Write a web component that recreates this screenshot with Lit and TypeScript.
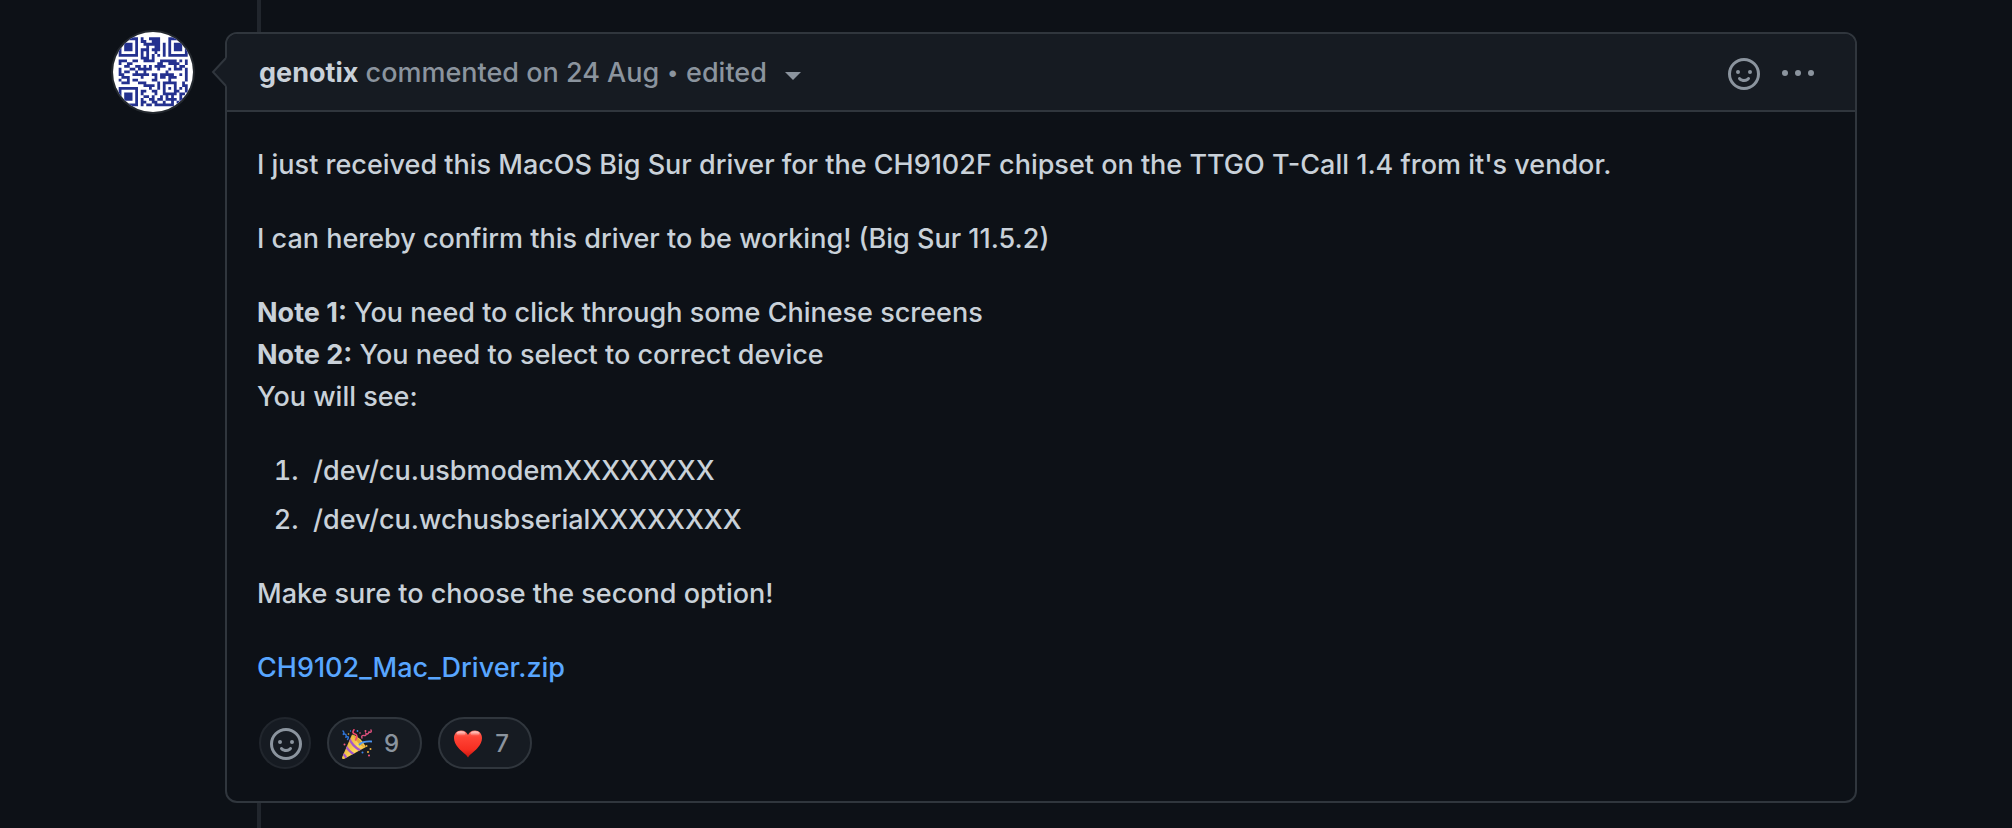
import { LitElement, html, css, svg } from "lit";
import { customElement } from "lit/decorators.js";

const QR_ROWS = [
  "1111111010011110001111111",
  "1000001011001110001000001",
  "1011101001111110101011101",
  "1011101000100110101011101",
  "1011101011101110101011101",
  "1000001010100100101000001",
  "1111111010101010101111111",
  "0000000011101000000000000",
  "1110011001111001111110101",
  "1001100000000011001111001",
  "0011001101010111100010110",
  "1000110111110010001011101",
  "1011001001000000010000001",
  "1100011111101101111100101",
  "0111000010000101101110001",
  "1001011000001100001000001",
  "0111000111000010111110010",
  "0000000001111010100010011",
  "1111111000010010101010101",
  "1000001011001100100011001",
  "1011101010000100111110110",
  "1011101001101001010100100",
  "1011101010011011011110110",
  "1000001011001100100101000",
  "1111111010110111111100100",
];

const CELL = 8.28;

const avatarPath = QR_ROWS.map((row, y) =>
  [...row]
    .map((bit, x) =>
      bit === "1"
        ? `M${(17 + x * CELL).toFixed(2)} ${(16 + y * CELL).toFixed(2)}h8.4v8.4h-8.4z`
        : ""
    )
    .join("")
).join("");

const smiley = html`<svg class="icon" viewBox="0 0 16 16" aria-hidden="true">
  ${svg`<path fill-rule="evenodd" d="M1.5 8a6.5 6.5 0 1113 0 6.5 6.5 0 01-13 0zM8 0a8 8 0 100 16A8 8 0 008 0zM5 8a1 1 0 100-2 1 1 0 000 2zm7-1a1 1 0 11-2 0 1 1 0 012 0zM5.32 9.636a.75.75 0 011.038.175l.007.009c.103.118.22.222.35.31.264.178.683.37 1.285.37.602 0 1.02-.192 1.285-.371.13-.088.247-.192.35-.31l.007-.008a.75.75 0 111.222.87l-.614-.431c.614.43.614.431.613.431v.001l-.001.002-.002.003-.005.007-.014.019a1.984 1.984 0 01-.184.213c-.16.166-.338.316-.53.445-.63.418-1.37.638-2.127.629-.946 0-1.652-.308-2.126-.63a3.32 3.32 0 01-.715-.657l-.014-.02-.005-.006-.002-.003v-.002h-.001l.613-.432-.614.43a.75.75 0 01.183-1.044h.001z"/>`}
</svg>`;

const kebab = html`<svg class="icon" viewBox="0 0 16 16" aria-hidden="true">
  <circle cx="1.5" cy="7.5" r="1.5"></circle>
  <circle cx="8" cy="7.5" r="1.5"></circle>
  <circle cx="14.5" cy="7.5" r="1.5"></circle>
</svg>`;

const party = html`<svg class="emoji" viewBox="0 0 30 30" aria-hidden="true">
  <defs>
    <linearGradient id="cone" x1="0" y1="0.2" x2="1" y2="0.8">
      <stop offset="0" stop-color="#d9952b"></stop>
      <stop offset="0.55" stop-color="#ffd95c"></stop>
      <stop offset="1" stop-color="#e0a02f"></stop>
    </linearGradient>
    <clipPath id="cone-clip"><path d="M0 28.5 10 5.500Q19 8 24 18L2 30Q0 30.500 0 28.500z"></path></clipPath>
  </defs>
  <g clip-path="url(#cone-clip)">
    <path d="M0 0h30v30H0z" fill="url(#cone)"></path>
    <path d="M7 9Q10 17 19 22M3.500 16Q6 22 13 26M0 24Q3 26 5 30" fill="none" stroke="#a558c9" stroke-width="2.200"></path>
  </g>
  <path d="M11 5.500Q17 9 20 14T23.500 18.500Q18 17 14.500 12T11 5.500" fill="#e2a93a"></path>
  <g fill="none" stroke-linecap="round">
    <path d="M17.500 15.500Q21 12 29.500 12.500" stroke="#4b94f0" stroke-width="1.800"></path>
    <path d="M1 2Q3 4 .8 5.500Q5 4 4 8Q8 7 5.500 10.500" stroke="#2f75d8" stroke-width="1.400"></path>
    <path d="M12 .8Q9.500 4 13 5T13.500 11" stroke="#f0476c" stroke-width="1.600"></path>
    <path d="M20 9Q19 6 22 6.500Q24.500 7 24 4.500Q26 6 27 3Q30 4 29 1" stroke="#e0507d" stroke-width="1.400"></path>
  </g>
  <g fill="#f2577e">
    <circle cx="23.500" cy="2" r="1"></circle><circle cx="2.500" cy="15.500" r="1"></circle>
    <circle cx="27" cy="26.500" r="1"></circle><circle cx="18" cy="4" r=".8"></circle>
  </g>
  <g fill="#f2b43c">
    <circle cx="28.500" cy="20" r="1"></circle><circle cx="26" cy="23" r="1"></circle>
    <circle cx="6.500" cy="5" r=".8"></circle><circle cx="24.500" cy="17" r="1"></circle>
  </g>
  <g fill="#3d84e6">
    <circle cx="20.500" cy="23.500" r="1"></circle><circle cx="15.500" cy="2" r=".9"></circle>
    <circle cx="8.500" cy="2" r=".7"></circle>
  </g>
</svg>`;

const heart = html`<svg class="emoji" viewBox="0 0 30 30" aria-hidden="true">
  <defs>
    <linearGradient id="heart" x1="0" y1="0" x2="0" y2="1">
      <stop offset="0" stop-color="#ff7466"></stop>
      <stop offset="0.25" stop-color="#ff4436"></stop>
      <stop offset="0.7" stop-color="#f82f22"></stop>
      <stop offset="1" stop-color="#c4160f"></stop>
    </linearGradient>
    <linearGradient id="shine" x1="0" y1="0" x2="0" y2="1">
      <stop offset="0" stop-color="#fff" stop-opacity=".75"></stop>
      <stop offset="1" stop-color="#fff" stop-opacity="0"></stop>
    </linearGradient>
  </defs>
  <path fill="url(#heart)" d="M15 28.500C13.500 25.500 9 23 5.500 19C2.500 15.500 1 12.500 1 9C1 4.500 4 1.500 8 1.500C11.500 1.500 14 3.500 15 6C16 3.500 18.500 1.500 22 1.500C26 1.500 29 4.500 29 9C29 12.500 27.500 15.500 24.500 19C21 23 16.500 25.500 15 28.500z"></path>
  <ellipse cx="8" cy="4.500" rx="4.500" ry="2.300" fill="url(#shine)"></ellipse>
  <ellipse cx="22" cy="4.500" rx="4.500" ry="2.300" fill="url(#shine)"></ellipse>
</svg>`;

@customElement("app-root")
export class AppRoot extends LitElement {
  static styles = css`
    :host {
      display: block;
      background: #0d1117;
      color: #c9d1d9;
      font-family: Inter, "Liberation Sans", sans-serif;
      font-size: 27px;
      font-weight: 450;
      line-height: 42px;
    }
    * {
      box-sizing: border-box;
    }
    a {
      color: inherit;
      text-decoration: none;
    }
    button {
      font: inherit;
      color: inherit;
      background: none;
      border: 0;
      padding: 0;
      cursor: pointer;
    }
    .page {
      display: flex;
      align-items: flex-start;
      gap: 32px;
      min-height: 100vh;
      padding: 0 155px 0 113px;
    }
    .avatar {
      flex: none;
      width: 80px;
      height: 80px;
      margin-top: 32px;
      border-radius: 50%;
      background: #fff;
      box-shadow: 0 0 0 2px rgba(240, 246, 252, 0.1);
      overflow: hidden;
    }
    .avatar svg {
      display: block;
      width: 100%;
    }
    .thread {
      flex: 1;
      min-width: 0;
      align-self: stretch;
      padding: 32px 0 25px;
      background: linear-gradient(#21262d, #21262d) 32px 0 / 4px 100% no-repeat;
    }
    .card {
      position: relative;
      border: 2px solid #30363d;
      border-radius: 12px;
      background: #0d1117;
    }
    .arrow {
      position: absolute;
      top: 22px;
      left: -16px;
      width: 18px;
      height: 32px;
    }
    .header {
      display: flex;
      align-items: center;
      justify-content: space-between;
      padding: 18px 41px 16px 32px;
      border-bottom: 2px solid #30363d;
      border-radius: 10px 10px 0 0;
      background: #161b22;
      color: #8b949e;
    }
    .title {
      margin: 0;
      font-size: inherit;
      font-weight: inherit;
    }
    .author {
      color: #c9d1d9;
      font-weight: 700;
    }
    .dot {
      margin: 0 2px;
      font-family: "Liberation Sans", sans-serif;
      font-size: 24px;
      line-height: 24px;
    }
    .caret {
      display: inline-block;
      margin-left: 18px;
      border: 8px solid transparent;
      border-top-color: currentColor;
      border-bottom: 0;
      vertical-align: 2px;
    }
    .actions {
      display: flex;
      gap: 22px;
      padding-top: 2px;
    }
    .actions button {
      display: flex;
    }
    .icon {
      display: block;
      width: 32px;
      height: 32px;
      fill: #8b949e;
    }
    .body {
      padding: 32px 30px;
    }
    .body p,
    .body ol {
      margin: 0 0 32px;
    }
    .body ol {
      padding-left: 56px;
    }
    li::marker {
      content: counter(list-item) ".\\a0\\a0";
    }
    li + li {
      margin-top: 7px;
    }
    strong {
      font-weight: 700;
    }
    .body .file {
      margin-bottom: 28px;
    }
    .file a {
      color: #58a6ff;
    }
    .reactions {
      display: flex;
      gap: 16px;
      padding-left: 2px;
    }
    .reaction {
      display: flex;
      align-items: center;
      gap: 12px;
      height: 52px;
      padding: 2px 21px 0 13px;
      border: 2px solid #30363d;
      border-radius: 26px;
      background: #161b22;
      color: #8b949e;
      font-size: 24px;
    }
    .add {
      padding: 2px 7px 0 9px;
      border-color: #21262d;
    }
    .emoji {
      display: block;
      width: 30px;
      height: 30px;
    }
  `;

  render() {
    return html`
      <main class="page">
        <a class="avatar" href="#genotix" aria-label="genotix">
          <svg viewBox="0 0 240 240" aria-hidden="true">
            <path fill="#24318f" d=${avatarPath}></path>
          </svg>
        </a>
        <div class="thread">
          <article class="card">
            <svg class="arrow" viewBox="0 0 18 32" aria-hidden="true">
              <path d="M18 1 15 2 2 16 15 30 18 31z" fill="#161b22"></path>
              <path d="M15 2 2 16 15 30" fill="none" stroke="#30363d" stroke-width="2"></path>
            </svg>
            <header class="header">
              <h3 class="title">
                <a class="author" href="#genotix">genotix</a>
                commented <a href="#comment">on 24 Aug</a>
                <span class="dot">•</span>
                <button type="button">edited<span class="caret"></span></button>
              </h3>
              <div class="actions">
                <button type="button" aria-label="Add your reaction">${smiley}</button>
                <button type="button" aria-label="Show options">${kebab}</button>
              </div>
            </header>
            <div class="body">
              <p>
                I just received this MacOS Big Sur driver for the CH9102F chipset on the TTGO T-Call 1.4
                from it's vendor.
              </p>
              <p>I can hereby confirm this driver to be working! (Big Sur 11.5.2)</p>
              <p>
                <strong>Note 1:</strong> You need to click through some Chinese screens<br />
                <strong>Note 2:</strong> You need to select to correct device<br />
                You will see:
              </p>
              <ol>
                <li>/dev/cu.usbmodemXXXXXXXX</li>
                <li>/dev/cu.wchusbserialXXXXXXXX</li>
              </ol>
              <p>Make sure to choose the second option!</p>
              <p class="file"><a href="#CH9102_Mac_Driver.zip">CH9102_Mac_Driver.zip</a></p>
              <div class="reactions">
                <button type="button" class="reaction add" aria-label="Add your reaction">${smiley}</button>
                <button type="button" class="reaction" aria-label="Hooray: 9">${party}<span>9</span></button>
                <button type="button" class="reaction" aria-label="Heart: 7">${heart}<span>7</span></button>
              </div>
            </div>
          </article>
        </div>
      </main>
    `;
  }
}
